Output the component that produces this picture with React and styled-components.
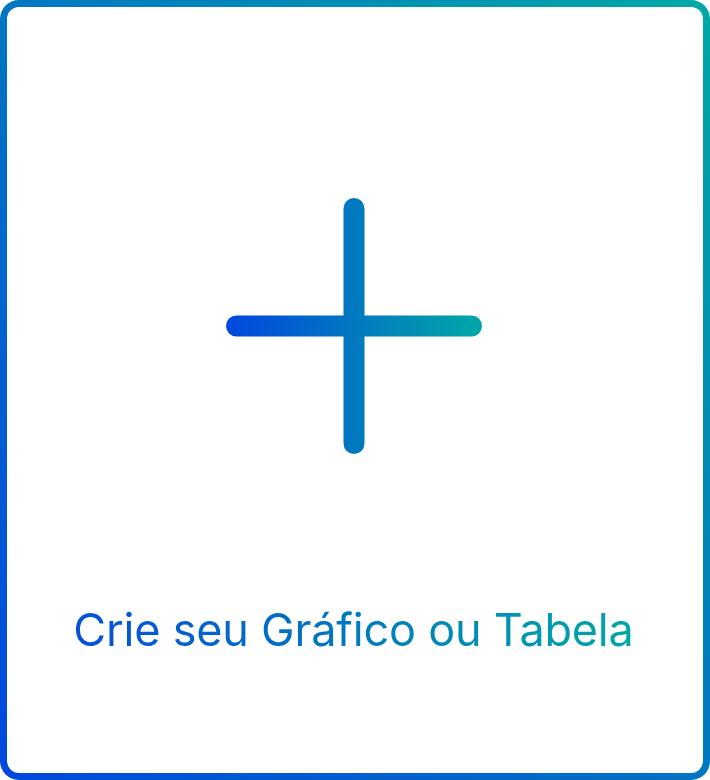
import React from 'react'
import styled, { createGlobalStyle } from 'styled-components'

const START = '#0047de'
const END = '#00a8a6'

const GlobalStyle = createGlobalStyle`
  html, body {
    margin: 0;
    padding: 0;
    background: #ffffff;
  }
  body {
    font-family: Inter, "Noto Sans", sans-serif;
  }
`

const Card = styled.button`
  box-sizing: border-box;
  width: 710px;
  height: 780px;
  padding: 191px 3px 0 0;
  display: flex;
  flex-direction: column;
  align-items: center;
  border: 7px solid transparent;
  border-radius: 19px;
  background:
    linear-gradient(#ffffff, #ffffff) padding-box,
    linear-gradient(to top right, ${START}, #0076c2 50%, ${END}) border-box;
  cursor: pointer;
  font: inherit;
`

const Caption = styled.span`
  margin-top: 148px;
  font-size: 45px;
  line-height: 56px;
  font-weight: 400;
  letter-spacing: -0.2px;
  background: linear-gradient(to right, #0550da, #0079c0 50%, ${END});
  -webkit-background-clip: text;
  background-clip: text;
  color: transparent;
`

const PlusIcon = () =>
  <svg width='256' height='256' viewBox='0 0 256 256' fill='none'>
    <defs>
      <linearGradient id='plusGradient' x1='0' y1='0' x2='256' y2='0' gradientUnits='userSpaceOnUse'>
        <stop offset='0' stopColor={START} />
        <stop offset='0.5' stopColor='#0078c0' />
        <stop offset='1' stopColor={END} />
      </linearGradient>
    </defs>
    <g stroke='url(#plusGradient)' strokeWidth='21' strokeLinecap='round'>
      <line x1='10.5' y1='128' x2='245.5' y2='128' />
      <line x1='128' y1='10.5' x2='128' y2='245.5' />
    </g>
  </svg>

export default function App () {
  return (
    <>
      <GlobalStyle />
      <Card type='button'>
        <PlusIcon />
        <Caption>Crie seu Gráfico ou Tabela</Caption>
      </Card>
    </>
  )
}
